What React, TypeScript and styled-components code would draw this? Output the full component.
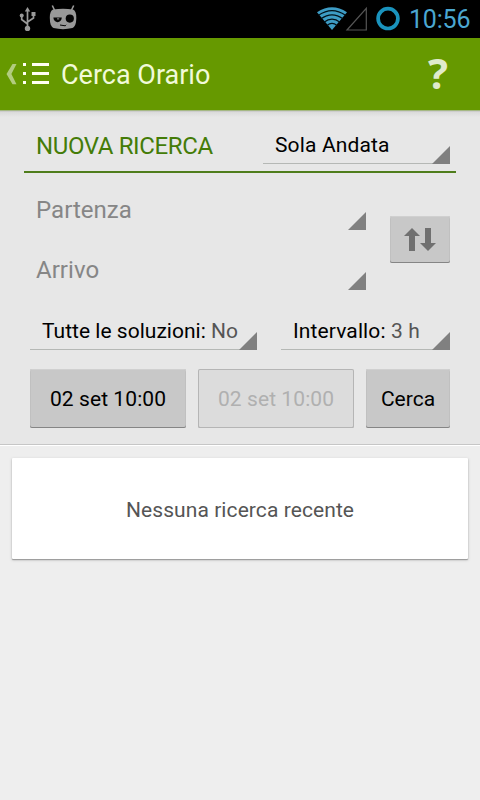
import React from 'react';
import styled, { createGlobalStyle } from 'styled-components';

const GlobalStyle = createGlobalStyle`
  * { box-sizing: border-box; }
  body { margin: 0; background: #eee; font-family: Roboto, "Noto Sans", sans-serif; }
  button { font-family: inherit; padding: 0; border: 0; }
`;

const Screen = styled.div`
  width: 480px;
  height: 800px;
  display: flex;
  flex-direction: column;
  overflow: hidden;
  background: #eeeeee;
`;

const StatusBar = styled.div`
  height: 38px;
  flex: none;
  display: flex;
  align-items: flex-start;
  justify-content: space-between;
  background: #000;
`;

const Clock = styled.span`
  color: #4ba7d1;
  font-size: 25px;
  line-height: 40px;
  white-space: nowrap;
  letter-spacing: -0.2px;
  width: 71px;
`;

const StatusGroup = styled.div`
  display: flex;
  height: 38px;
`;

const ActionBar = styled.header`
  height: 72px;
  flex: none;
  display: flex;
  align-items: flex-start;
  background: #669900;
`;

const Title = styled.h1`
  margin: 0;
  flex: 1;
  font-size: 27px;
  font-weight: 400;
  line-height: 74px;
  color: #f1fad9;
  white-space: nowrap;
`;

const Form = styled.section`
  height: 334px;
  flex: none;
  padding: 0 24px;
  background: linear-gradient(#a5b884 0 1px, #cdcdcd 1px 2px, #dadada 2px, #e7e7e7 7px);
`;

const Heading = styled.div`
  height: 63px;
  padding: 17px 6px 0 12px;
  display: flex;
  justify-content: space-between;
  border-bottom: 2px solid #4f7d1c;
`;

const HeadingText = styled.h2`
  margin: 0;
  font-size: 24px;
  font-weight: 400;
  line-height: 38px;
  color: #447c08;
  letter-spacing: -0.38px;
  white-space: nowrap;
`;

const Spinner = styled.div<{ $width: number }>`
  width: ${(p) => p.$width}px;
  height: 37px;
  padding-left: 12px;
  display: flex;
  align-items: flex-end;
  justify-content: space-between;
  border-bottom: 1px solid #b5b8b5;
`;

const SpinnerText = styled.span<{ $spacing?: number }>`
  font-size: 21px;
  line-height: 36px;
  letter-spacing: ${(p) => p.$spacing ?? 0}px;
  color: #000;
  white-space: nowrap;
`;

const Muted = styled.span`
  color: #555;
`;

const StationBlock = styled.div`
  display: flex;
  height: 121px;
  padding: 0 6px;
  justify-content: space-between;
`;

const Stations = styled.div`
  width: 336px;
`;

const Station = styled.div`
  height: 60px;
  padding: 0 0 4px 6px;
  display: flex;
  justify-content: space-between;
  align-items: flex-end;
`;

const StationText = styled.span`
  font-size: 24px;
  line-height: 40px;
  height: 39px;
  color: #868686;
  letter-spacing: 0.04px;
`;

const Corner = styled.span`
  width: 18px;
  height: 18px;
  flex: none;
  background: #808080;
  clip-path: polygon(100% 0, 100% 100%, 0 100%);
  margin: 0 0 -1px -12px;
`;

const OptionRow = styled.div`
  display: flex;
  justify-content: space-between;
  margin-top: 19px;
  padding: 0 6px;
`;

const ButtonRow = styled.div`
  display: flex;
  gap: 12px;
  padding: 19px 6px 0;
`;

const Button = styled.button<{ $width: number; $height?: number; $spacing?: number }>`
  width: ${(p) => p.$width}px;
  height: ${(p) => p.$height ?? 59}px;
  display: flex;
  align-items: center;
  justify-content: center;
  background: #c8c8c8;
  border-radius: 2px;
  box-shadow: inset 0 -1px #858585, inset 0 1px #d0d0d0, inset 1px 0 #c0c0c0, inset -1px 0 #c0c0c0;
  font-size: 21px;
  letter-spacing: ${(p) => p.$spacing ?? 0}px;
  color: #000;
  white-space: nowrap;

  &:disabled {
    background: #dcdcdc;
    color: #b0b0b0;
    box-shadow: inset 0 0 0 1px #b5b5b5, inset 0 -1px #aaa;
  }
`;

const SwapButton = styled(Button)`
  margin-top: 43px;
`;

const Results = styled.main`
  flex: 1;
  padding: 12px;
  border-top: 1px solid #c6c6c6;
  box-shadow: inset 0 1px #fff;
`;

const Card = styled.div`
  height: 101px;
  margin-top: 1px;
  display: flex;
  align-items: center;
  justify-content: center;
  background: #fff;
  border-radius: 1px;
  box-shadow: 0 1px 1px #999, 0 1px 3px #bbb;
  font-size: 21px;
  letter-spacing: 0.08px;
  color: #555;
  padding-top: 2px;
`;

const LeftStatusIcons = () => (
  <svg width="90" height="38" viewBox="0 0 90 38" fill="#999">
    <g fill="none" stroke="#999" strokeWidth="1.7">
      <path d="M27.5 11v15M27.5 24l-5.8-4.5V15M27.5 22l6-4v-4" />
    </g>
    <path d="M27.5 7l2.7 4.5h-5.4z" />
    <circle cx="27.5" cy="28.4" r="2.7" />
    <circle cx="21.7" cy="15.4" r="2" />
    <path d="M31.5 12h4v4h-4z" />
    <path d="M52.3 5.5l2.4 5M73.7 5.5l-2.4 5" stroke="#999" strokeWidth="1.6" />
    <path d="M53 9.5Q63 8 73 9.5Q76.3 10.5 76.3 18Q76.3 26 72.5 28Q63 30.3 53.5 28Q49.8 26 49.8 18Q49.8 10.5 53 9.5z" />
    <circle cx="69.8" cy="18.6" r="4.1" fill="#050505" />
    <path d="M53.4 17.4h8.4a4.2 4.8 0 0 1-8.4 0z" fill="#050505" />
    <path d="M57 18.2h2.2v1.3h-2.2z" fill="#777" />
    <path d="M60 25l5.2.8 1-1" fill="none" stroke="#050505" />
  </svg>
);

const SignalIcons = () => (
  <svg width="94" height="38" viewBox="316 0 94 38">
    <path d="M333 30L318 12.2Q333 2.2 348 12.2z" fill="#3d9cc5" />
    <g fill="none" stroke="#001019" strokeWidth="1.2">
      <path d="M319.5 15.3Q333 6 346.5 15.3" />
      <path d="M322 18.8Q333 10.8 344 18.8" />
      <path d="M325 22.2Q333 16 341 22.2" />
      <path d="M328 25.5Q333 21.3 338 25.5" />
    </g>
    <path d="M348 30L367.3 8.3V30z" fill="none" stroke="#555" strokeWidth="1.2" />
    <circle cx="389" cy="18.6" r="9.9" fill="none" stroke="#1a93bd" strokeWidth="3.7" />
  </svg>
);

const MenuIcon = () => (
  <svg width="61" height="72" viewBox="0 38 61 72">
    <path d="M12.5 64h4L11.4 74l5.1 10.3h-4L6.5 74z" fill="#b2cc7f" />
    <path d="M23 63h3v3h-3zM23 72h3v3h-3zM23 81h3v3h-3zM32 63h17v3H32zM32 72h17v3H32zM32 81h17v3H32z" fill="#fffff2" />
  </svg>
);

const Help = styled.span`
  width: 52px;
  font-family: "Open Sans", sans-serif;
  font-weight: 700;
  font-size: 42px;
  line-height: 70px;
  color: #e0ebcc;
`;

const SwapIcon = () => (
  <svg width="34" height="27" viewBox="403 226 34 27" fill="#707070">
    <path d="M404 236l8-8 8 8h-5v15h-6v-15zM425 228h6v15h5l-8 8-8-8h5z" />
  </svg>
);

export default function App() {
  return (
    <>
      <GlobalStyle />
      <Screen>
        <StatusBar>
          <LeftStatusIcons />
          <StatusGroup>
            <SignalIcons />
            <Clock>10:56</Clock>
          </StatusGroup>
        </StatusBar>
        <ActionBar>
          <MenuIcon />
          <Title>Cerca Orario</Title>
          <Help>?</Help>
        </ActionBar>
        <Form>
          <Heading>
            <HeadingText>NUOVA RICERCA</HeadingText>
            <Spinner $width={187}>
              <SpinnerText $spacing={0.15}>Sola Andata</SpinnerText>
              <Corner />
            </Spinner>
          </Heading>
          <StationBlock>
            <Stations>
              <Station>
                <StationText>Partenza</StationText>
                <Corner />
              </Station>
              <Station>
                <StationText>Arrivo</StationText>
                <Corner />
              </Station>
            </Stations>
            <SwapButton $width={60} $height={47} aria-label="Inverti">
              <SwapIcon />
            </SwapButton>
          </StationBlock>
          <OptionRow>
            <Spinner $width={227}>
              <SpinnerText $spacing={0.02}>Tutte le soluzioni: <Muted>No</Muted></SpinnerText>
              <Corner />
            </Spinner>
            <Spinner $width={169}>
              <SpinnerText $spacing={0.12}>Intervallo: <Muted>3 h</Muted></SpinnerText>
              <Corner />
            </Spinner>
          </OptionRow>
          <ButtonRow>
            <Button $width={156} $spacing={0.08}>02 set 10:00</Button>
            <Button $width={156} $spacing={0.08} disabled>02 set 10:00</Button>
            <Button $width={84}>Cerca</Button>
          </ButtonRow>
        </Form>
        <Results>
          <Card>Nessuna ricerca recente</Card>
        </Results>
      </Screen>
    </>
  );
}
